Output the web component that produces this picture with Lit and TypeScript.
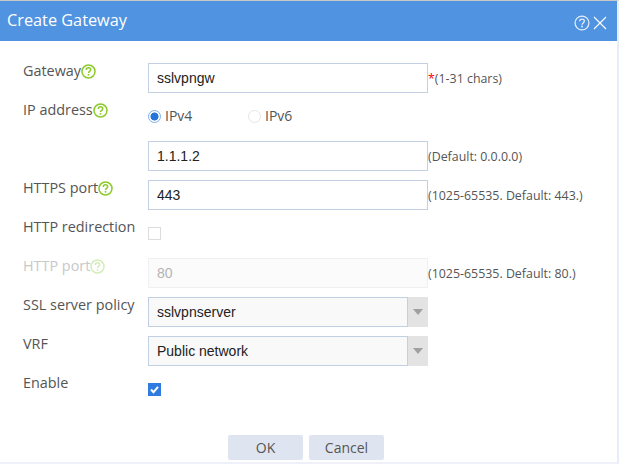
import { LitElement, html, css } from "lit";
import { customElement } from "lit/decorators.js";
import { classMap } from "lit/directives/class-map.js";

const helpIcon = (color: string, size = 15, sw = 1.5) => html`
  <svg class="help" width=${size} height=${size} viewBox="0 0 15 15" fill="none">
    <circle cx="7.5" cy="7.5" r="6.5" stroke=${color} stroke-width=${sw}></circle>
    <path d="M5.3 5.9c0-1.3 1-2.1 2.2-2.1s2.2.8 2.2 1.9c0 1.7-2.2 1.7-2.2 3.4" stroke=${color} stroke-width=${sw}></path>
    <rect x="6.7" y="10" width="1.6" height="1.6" fill=${color}></rect>
  </svg>
`;

@customElement("app-root")
export class AppRoot extends LitElement {
  static styles = css`
    :host {
      display: block;
      width: 619px;
      height: 464px;
      background: #fff;
      font-family: "Open Sans", "Noto Sans", sans-serif;
      font-size: 14px;
      color: #555;
      overflow: hidden;
    }
    .dialog {
      box-sizing: border-box;
      width: 619px;
      height: 464px;
      border-top: 1px solid #c8c8c8;
      border-right: 2px solid #e6eefa;
      border-bottom: 2px solid #eef1f7;
      display: flex;
      flex-direction: column;
    }
    .header {
      height: 40px;
      flex: none;
      background: #5093e1;
      color: #fff;
      display: flex;
      align-items: center;
      justify-content: space-between;
      padding: 0 10px 0 7px;
      font-size: 16.3px;
    }
    .title { padding-bottom: 2px; }
    .tools { display: flex; align-items: center; gap: 3px; margin-top: 3px; }
    .form {
      display: flex;
      flex-direction: column;
      gap: 9px;
      padding: 22px 0 0 23px;
    }
    .row {
      display: flex;
      height: 30px;
    }
    .label {
      width: 125px;
      flex: none;
      display: flex;
      align-items: flex-start;
      font-size: 14.4px;
      line-height: 16px;
      white-space: nowrap;
    }
    .label .help { margin-top: 1px; }
    .label.off { color: #c8c8c8; }
    .control {
      width: 280px;
      flex: none;
      box-sizing: border-box;
      height: 30px;
      border: 1px solid #c3d0e3;
      padding: 0 8px;
      font-family: "Liberation Sans", Arial, sans-serif;
      line-height: 28px;
      color: #222;
      background: #fff;
    }
    .control.off {
      border-color: #f0f0f2;
      background: #fbfbfb;
      color: #b4b4b4;
    }
    .note {
      font-size: 12.4px;
      line-height: 32px;
      white-space: nowrap;
      color: #555;
    }
    .star { color: #f00; }
    .select { display: flex; width: 280px; height: 30px; }
    .select .control {
      width: 260px;
      background: #f9f9f9;
    }
    .arrow {
      flex: 1;
      background: #e3e3e3;
      display: flex;
      align-items: center;
      justify-content: center;
    }
    .arrow i {
      display: block;
      border-left: 5px solid transparent;
      border-right: 5px solid transparent;
      border-top: 6px solid #a0a0a0;
    }
    .radios { display: flex; align-items: center; height: 28px; width: 280px; }
    .radio { display: flex; align-items: center; gap: 4px; width: 100px; color: #555; }
    .radio span:last-child { padding-bottom: 2px; }
    .dot {
      box-sizing: border-box;
      width: 13px;
      height: 13px;
      border-radius: 50%;
      border: 1px solid #e6e6e6;
      background: #fff;
    }
    .dot.on {
      border: 1px solid #7db0ea;
      background: radial-gradient(circle, #2674d9 0 3.6px, #fff 4.4px);
    }
    .box {
      box-sizing: border-box;
      width: 13px;
      height: 13px;
      margin-top: 8px;
      border: 1px solid #dcdcdc;
      background: #fff;
      display: flex;
    }
    .box.on { border: none; background: #2f7be0; }
    .actions {
      display: flex;
      gap: 6px;
      padding: 30px 0 0 228px;
    }
    .btn {
      box-sizing: border-box;
      width: 75px;
      height: 25px;
      border-radius: 2px;
      background: #dfe5f0;
      text-align: center;
      line-height: 25px;
      color: #555;
    }
  `;

  private label(text: string, help = false, off = false) {
    return html`<div class=${classMap({ label: true, off })}>
      ${text}${help ? helpIcon(off ? "#d6edba" : "#8ccb2a") : ""}
    </div>`;
  }

  private select(value: string) {
    return html`<div class="select">
      <div class="control">${value}</div>
      <div class="arrow"><i></i></div>
    </div>`;
  }

  render() {
    return html`
      <div class="dialog">
        <div class="header">
          <span class="title">Create Gateway</span>
          <span class="tools">
            ${helpIcon("#e4eefb", 16, 1.2)}
            <svg width="14" height="14" viewBox="0 0 14 14" fill="none" stroke="#fff" stroke-width="1.1">
              <path d="M1 1l12 12M13 1L1 13"></path>
            </svg>
          </span>
        </div>
        <div class="form">
          <div class="row">
            ${this.label("Gateway", true)}
            <div class="control">sslvpngw</div>
            <div class="note"><span class="star">*</span>(1-31 chars)</div>
          </div>
          <div class="row">
            ${this.label("IP address", true)}
            <div class="radios">
              <span class="radio"><span class="dot on"></span><span>IPv4</span></span>
              <span class="radio"><span class="dot"></span><span>IPv6</span></span>
            </div>
          </div>
          <div class="row">
            ${this.label("")}
            <div class="control">1.1.1.2</div>
            <div class="note">(Default: 0.0.0.0)</div>
          </div>
          <div class="row">
            ${this.label("HTTPS port", true)}
            <div class="control">443</div>
            <div class="note">(1025-65535. Default: 443.)</div>
          </div>
          <div class="row">
            ${this.label("HTTP redirection")}
            <span class="box"></span>
          </div>
          <div class="row">
            ${this.label("HTTP port", true, true)}
            <div class="control off">80</div>
            <div class="note">(1025-65535. Default: 80.)</div>
          </div>
          <div class="row">
            ${this.label("SSL server policy")}
            ${this.select("sslvpnserver")}
          </div>
          <div class="row">
            ${this.label("VRF")}
            ${this.select("Public network")}
          </div>
          <div class="row">
            ${this.label("Enable")}
            <span class="box on">
              <svg width="13" height="13" viewBox="0 0 13 13" fill="none" stroke="#fff" stroke-width="2">
                <path d="M3 6.5l2.5 2.7L10 3.8"></path>
              </svg>
            </span>
          </div>
        </div>
        <div class="actions">
          <div class="btn">OK</div>
          <div class="btn">Cancel</div>
        </div>
      </div>
    `;
  }
}
